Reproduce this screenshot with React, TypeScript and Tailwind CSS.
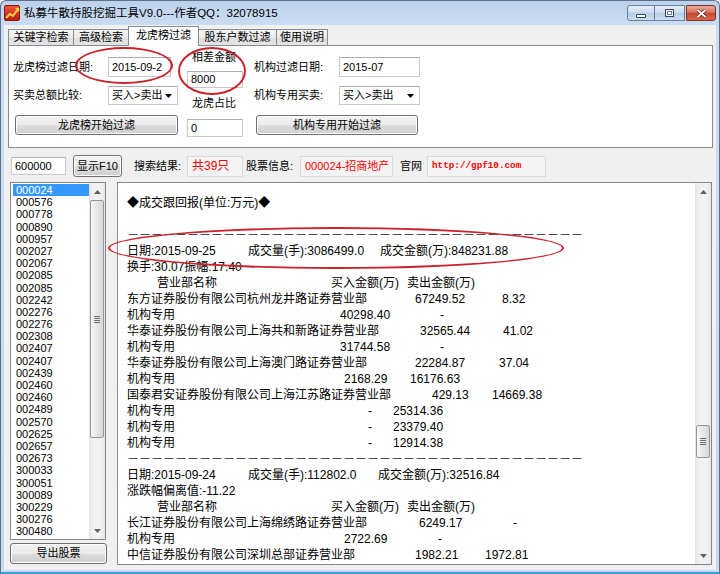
import React from "react";

type Cell = { t: string; c?: string };

const codes = [
  "000024", "000576", "000778", "000890", "000957", "002027", "002067", "002085",
  "002085", "002242", "002276", "002276", "002308", "002407", "002407", "002439",
  "002460", "002460", "002489", "002570", "002625", "002657", "002673", "300033",
  "300051", "300089", "300229", "300276", "300480",
];

// text report lines, widths put each column where the program's space padding puts it
const report: (Cell[] | "dash" | "blank")[] = [
  [{ t: "◆成交跟回报(单位:万元)◆" }],
  "blank",
  "dash",
  [
    { t: "日期:2015-09-25", c: "w-[121px]" },
    { t: "成交量(手):3086499.0", c: "w-[132px]" },
    { t: "成交金额(万):848231.88" },
  ],
  [{ t: "换手:30.07振幅:17.40" }],
  [
    { t: "营业部名称", c: "ml-[30px] w-[174px]" },
    { t: "买入金额(万)", c: "w-[76px]" },
    { t: "卖出金额(万)" },
  ],
  [
    { t: "东方证券股份有限公司杭州龙井路证券营业部", c: "w-[288px]" },
    { t: "67249.52", c: "w-[87px]" },
    { t: "8.32" },
  ],
  [
    { t: "机构专用", c: "w-[213px]" },
    { t: "40298.40", c: "w-[100px]" },
    { t: "-" },
  ],
  [
    { t: "华泰证券股份有限公司上海共和新路证券营业部", c: "w-[293px]" },
    { t: "32565.44", c: "w-[83px]" },
    { t: "41.02" },
  ],
  [
    { t: "机构专用", c: "w-[213px]" },
    { t: "31744.58", c: "w-[100px]" },
    { t: "-" },
  ],
  [
    { t: "华泰证券股份有限公司上海澳门路证券营业部", c: "w-[288px]" },
    { t: "22284.87", c: "w-[84px]" },
    { t: "37.04" },
  ],
  [
    { t: "机构专用", c: "w-[217px]" },
    { t: "2168.29", c: "w-[66px]" },
    { t: "16176.63" },
  ],
  [
    { t: "国泰君安证券股份有限公司上海江苏路证券营业部", c: "w-[305px]" },
    { t: "429.13", c: "w-[60px]" },
    { t: "14669.38" },
  ],
  [
    { t: "机构专用", c: "w-[241px]" },
    { t: "-", c: "w-[25px]" },
    { t: "25314.36" },
  ],
  [
    { t: "机构专用", c: "w-[241px]" },
    { t: "-", c: "w-[25px]" },
    { t: "23379.40" },
  ],
  [
    { t: "机构专用", c: "w-[241px]" },
    { t: "-", c: "w-[25px]" },
    { t: "12914.38" },
  ],
  "dash",
  [
    { t: "日期:2015-09-24", c: "w-[121px]" },
    { t: "成交量(手):112802.0", c: "w-[130px]" },
    { t: "成交金额(万):32516.84" },
  ],
  [{ t: "涨跌幅偏离值:-11.22" }],
  [
    { t: "营业部名称", c: "ml-[30px] w-[174px]" },
    { t: "买入金额(万)", c: "w-[76px]" },
    { t: "卖出金额(万)" },
  ],
  [
    { t: "长江证券股份有限公司上海绵绣路证券营业部", c: "w-[292px]" },
    { t: "6249.17", c: "w-[94px]" },
    { t: "-" },
  ],
  [
    { t: "机构专用", c: "w-[217px]" },
    { t: "2722.69", c: "w-[94px]" },
    { t: "-" },
  ],
  [
    { t: "中信证券股份有限公司深圳总部证券营业部", c: "w-[288px]" },
    { t: "1982.21", c: "w-[70px]" },
    { t: "1972.81" },
  ],
];

const TextBox = ({ value, className }: { value: string; className: string }) => (
  <div
    className={`flex items-center border border-[#c5c9d0] border-t-[#abadb3] bg-white pl-[3px] text-[11px] ${className}`}
  >
    {value}
  </div>
);

const Select = ({ className }: { className: string }) => (
  <div
    className={`flex items-center justify-between border border-[#c5c9d0] border-t-[#abadb3] bg-white pl-[3px] pr-[5px] text-[11px] ${className}`}
  >
    <span>买入&gt;卖出</span>
    <svg width="7" height="4" viewBox="0 0 7 4">
      <path d="M0 0h7L3.5 4z" fill="#000" />
    </svg>
  </div>
);

const Button = ({ label, className }: { label: string; className: string }) => (
  <div
    className={`flex items-center justify-center rounded-[3px] border border-[#707070] bg-[linear-gradient(#f2f2f2_0%,#ebebeb_50%,#dddddd_51%,#cfcfcf_100%)] text-[11px] shadow-[inset_0_0_0_1px_#fcfcfc] ${className}`}
  >
    {label}
  </div>
);

const Arrow = ({ up }: { up?: boolean }) => (
  <div className="flex h-[17px] items-center justify-center">
    <svg width="7" height="4" viewBox="0 0 7 4">
      <path d={up ? "M0 4L3.5 0L7 4z" : "M0 0h7L3.5 4z"} fill="#606060" />
    </svg>
  </div>
);

const ScrollBar = ({ spacer, thumb }: { spacer: string; thumb: string }) => (
  <div className="flex w-[16px] flex-col bg-[linear-gradient(90deg,#e4e4e4,#f1f1f1_25%,#f1f1f1_75%,#e6e6e6)]">
    <Arrow up />
    <div className="flex flex-1 flex-col">
      <div className={spacer} />
      <div
        className={`mx-[1px] flex items-center justify-center rounded-[2px] border border-[#979797] bg-[linear-gradient(90deg,#f5f5f5,#e6e6e6_50%,#d8d8d8)] ${thumb}`}
      >
        <div className="flex flex-col gap-[1px]">
          <div className="h-px w-[6px] bg-[#6f6f6f]" />
          <div className="h-px w-[6px] bg-[#6f6f6f]" />
          <div className="h-px w-[6px] bg-[#6f6f6f]" />
          <div className="h-px w-[6px] bg-[#6f6f6f]" />
        </div>
      </div>
    </div>
    <Arrow />
  </div>
);

const InfoBox = ({ children, className }: { children: React.ReactNode; className: string }) => (
  <div
    className={`flex h-[21px] items-center border border-[#dadada] bg-[#f4f4f4] pl-[4px] text-[#ff0000] ${className}`}
  >
    {children}
  </div>
);

const App = () => {
  return (
    <div className="relative flex h-[574px] w-[720px] flex-col overflow-hidden rounded-t-[6px] border-x border-t border-[#5f7088] bg-[linear-gradient(#bcd2ec,#cadcf1_24px,#c6d9ef)] font-['Liberation_Sans','Noto_Sans_CJK_SC',sans-serif] text-black">
      {/* title bar */}
      <div className="flex h-[24px] items-start justify-between">
        <div className="flex items-center gap-[4px] pl-[3px] pt-[4px]">
          <svg width="16" height="16" viewBox="0 0 16 16">
            <defs>
              <linearGradient id="ic" x1="0" y1="0" x2="0" y2="1">
                <stop offset="0" stopColor="#f05a3c" />
                <stop offset="1" stopColor="#b5170f" />
              </linearGradient>
            </defs>
            <rect x="0.5" y="0.5" width="15" height="15" rx="1.5" fill="url(#ic)" stroke="#8a1a10" />
            <path d="M2 13L6 9L9 11L14 4" fill="none" stroke="#ffd23a" strokeWidth="2" />
            <path d="M11.5 3.5H14.5V6.5" fill="none" stroke="#ffd23a" strokeWidth="1.5" />
          </svg>
          <span className="text-[11.5px] leading-[16px]">私募牛散持股挖掘工具V9.0---作者QQ：32078915</span>
        </div>
        <div className="mr-[3px] mt-[4px] flex">
          <div className="flex h-[16px] w-[28px] items-center justify-center rounded-l-[3px] border border-[#6d7f98] bg-[linear-gradient(#e6eef8,#cddcef_45%,#b6cbe5_50%,#cadcf1)]">
            <div className="mt-[5px] h-[4px] w-[10px] rounded-[1px] border border-[#33465e] bg-white" />
          </div>
          <div className="flex h-[16px] w-[30px] items-center justify-center border-y border-r border-[#6d7f98] bg-[linear-gradient(#e6eef8,#cddcef_45%,#b6cbe5_50%,#cadcf1)]">
            <div className="h-[8px] w-[9px] border border-[#33465e] bg-white shadow-[inset_0_0_0_1px_#ffffff,inset_0_0_0_2px_#6e8099]" />
          </div>
          <div className="ml-[1px] flex h-[16px] w-[30px] items-center justify-center rounded-r-[3px] border border-[#7a3529] bg-[linear-gradient(#eaa998,#d87460_45%,#c54630_50%,#d6664c)]">
            <svg width="11" height="9" viewBox="0 0 11 9">
              <path d="M1.5 1L9.5 8M9.5 1L1.5 8" stroke="#5b1a10" strokeWidth="3.2" />
              <path d="M1.5 1L9.5 8M9.5 1L1.5 8" stroke="#ffffff" strokeWidth="1.8" />
            </svg>
          </div>
        </div>
      </div>

      {/* client area */}
      <div className="mx-[3px] flex h-[545px] flex-col bg-[#f0f0f0]">
        {/* tabs */}
        <div className="flex h-[20px] items-end pl-[4px] text-[11px]">
          <div className="flex h-[16px] w-[66px] items-center justify-center border border-b-0 border-[#898c95] bg-[linear-gradient(#f3f3f3,#ebebeb_50%,#dedede_51%,#e4e4e4)]">
            关键字检索
          </div>
          <div className="-ml-px flex h-[16px] w-[56px] items-center justify-center border border-b-0 border-[#898c95] bg-[linear-gradient(#f3f3f3,#ebebeb_50%,#dedede_51%,#e4e4e4)]">
            高级检索
          </div>
          <div className="relative z-10 -mb-px -ml-px flex h-[20px] w-[71px] items-center justify-center border border-b-0 border-[#898c95] bg-white pb-[2px]">
            龙虎榜过滤
          </div>
          <div className="-ml-px flex h-[16px] w-[79px] items-center justify-center border border-b-0 border-[#898c95] bg-[linear-gradient(#f3f3f3,#ebebeb_50%,#dedede_51%,#e4e4e4)]">
            股东户数过滤
          </div>
          <div className="-ml-px flex h-[16px] w-[52px] items-center justify-center border border-b-0 border-[#898c95] bg-[linear-gradient(#f3f3f3,#ebebeb_50%,#dedede_51%,#e4e4e4)]">
            使用说明
          </div>
        </div>

        {/* tab page */}
        <div className="ml-[4px] flex h-[103px] w-[705px] border border-[#898c95] bg-white text-[11px]">
          <div className="ml-[4px] flex flex-col pt-[11px]">
            <div className="flex h-[20px] items-center">
              <span className="w-[95px]">龙虎榜过滤日期:</span>
              <TextBox value="2015-09-2" className="h-[20px] w-[63px]" />
            </div>
            <div className="mt-[9px] flex h-[19px] items-center">
              <span className="w-[95px]">买卖总额比较:</span>
              <Select className="h-[19px] w-[70px]" />
            </div>
            <div className="mt-[10px] flex">
              <Button label="龙虎榜开始过滤" className="ml-[2px] h-[20px] w-[163px]" />
            </div>
          </div>

          <div className="ml-[9px] flex w-[56px] flex-col pt-[4px]">
            <span className="h-[14px] pl-[5px] leading-[14px]">相差金额</span>
            <TextBox value="8000" className="mt-[7px] h-[17px] w-[56px]" />
            <span className="mt-[8px] h-[14px] pl-[5px] leading-[14px]">龙虎占比</span>
            <TextBox value="0" className="mt-[9px] h-[18px] w-[56px]" />
          </div>

          <div className="ml-[11px] flex flex-col pt-[11px]">
            <div className="flex h-[20px] items-center">
              <span className="w-[85px]">机构过滤日期:</span>
              <TextBox value="2015-07" className="h-[20px] w-[81px]" />
            </div>
            <div className="mt-[9px] flex h-[19px] items-center">
              <span className="w-[85px]">机构专用买卖:</span>
              <Select className="h-[19px] w-[81px]" />
            </div>
            <div className="mt-[10px] flex">
              <Button label="机构专用开始过滤" className="ml-[2px] h-[20px] w-[162px]" />
            </div>
          </div>
        </div>

        {/* search row */}
        <div className="mt-[7px] flex h-[22px] items-center text-[11px]">
          <TextBox value="600000" className="ml-[7px] h-[18px] w-[55px]" />
          <Button label="显示F10" className="ml-[7px] h-[22px] w-[49px]" />
          <span className="ml-[12px] w-[53px]">搜索结果:</span>
          <InfoBox className="w-[56px] text-[12px]">共39只</InfoBox>
          <span className="ml-[3px] w-[54px]">股票信息:</span>
          <InfoBox className="w-[93px] text-[11px]">000024-招商地产</InfoBox>
          <span className="ml-[7px] w-[27px]">官网</span>
          <InfoBox className="w-[119px] font-['Liberation_Mono',monospace] text-[9.3px] font-bold">
            http://gpf10.com
          </InfoBox>
        </div>

        {/* lower area */}
        <div className="mt-[5px] flex">
          <div className="ml-[6px] flex w-[97px] flex-col">
            <div className="flex h-[358px] w-[96px] border border-[#828790] bg-white">
              <div className="flex-1 overflow-hidden pl-[2px] pt-[1px] text-[11px]">
                {codes.map((c, i) => (
                  <div
                    key={i}
                    className={
                      i === 0
                        ? "h-[12.2px] bg-[#3399ff] pl-[3px] leading-[12.2px] text-white"
                        : "h-[12.2px] pl-[3px] leading-[12.2px]"
                    }
                  >
                    {c}
                  </div>
                ))}
              </div>
              <ScrollBar spacer="h-0" thumb="h-[238px]" />
            </div>
            <Button label="导出股票" className="mt-[3px] h-[21px] w-[97px]" />
          </div>

          <div className="ml-[10px] flex h-[383px] w-[595px] border border-[#828790] bg-white">
            <div className="flex-1 overflow-hidden pl-[9px] pt-[12px] text-[12px]">
              {report.map((line, i) => {
                if (line === "blank") return <div key={i} className="h-[16px]" />;
                if (line === "dash")
                  return (
                    <div key={i} className="h-[16px] overflow-hidden whitespace-nowrap leading-[16px] text-[#222]">
                      {"－".repeat(38)}
                    </div>
                  );
                return (
                  <div key={i} className="flex h-[16px] items-center whitespace-nowrap leading-[16px]">
                    {line.map((cell, j) => (
                      <span key={j} className={`flex-none ${cell.c ?? ""}`}>
                        {cell.t}
                      </span>
                    ))}
                  </div>
                );
              })}
            </div>
            <ScrollBar spacer="h-[225px]" thumb="h-[33px]" />
          </div>
        </div>
      </div>

      {/* bottom frame edge */}
      <div className="mt-[2px] h-[2px] bg-[#3d9bd6]" />

      {/* red annotation rings drawn over the window */}
      <div className="pointer-events-none absolute left-[74px] top-[46px] h-[37px] w-[98px] rounded-[50%] border-2 border-[#c8232b]" />
      <div className="pointer-events-none absolute left-[177px] top-[46px] h-[48px] w-[68px] rounded-[50%] border-2 border-[#c8232b]" />
      <div className="pointer-events-none absolute left-[107px] top-[226px] h-[42px] w-[456px] rounded-[50%] border-2 border-[#c8232b]" />
    </div>
  );
};

export default App;
